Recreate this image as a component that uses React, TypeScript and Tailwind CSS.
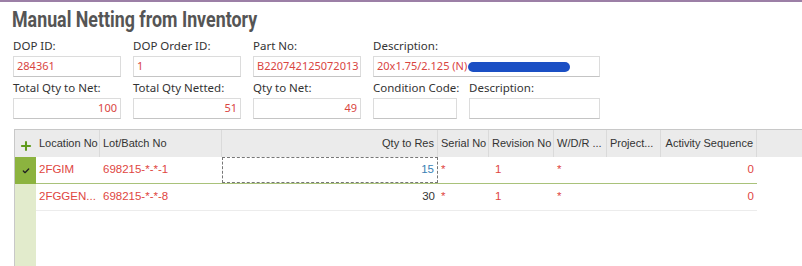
import { Check, Plus } from "lucide-react";

const labelFont = { fontFamily: '"Noto Sans", "DejaVu Sans", sans-serif' };

type Col = { key: string; title: string; w: string; align?: "right" };

const cols: Col[] = [
  { key: "loc", title: "Location No", w: "w-[64px]" },
  { key: "lot", title: "Lot/Batch No", w: "w-[122px]" },
  { key: "qty", title: "Qty to Res", w: "w-[216px]", align: "right" },
  { key: "serial", title: "Serial No", w: "w-[51px]" },
  { key: "rev", title: "Revision No", w: "w-[65px]" },
  { key: "wdr", title: "W/D/R ...", w: "w-[53px]" },
  { key: "proj", title: "Project...", w: "w-[54px]" },
  { key: "act", title: "Activity Sequence", w: "w-[96px]", align: "right" },
];

const rows = [
  { loc: "2FGIM", lot: "698215-*-*-1", qty: "15", serial: "*", rev: "1", wdr: "*", proj: "", act: "0" },
  { loc: "2FGGEN...", lot: "698215-*-*-8", qty: "30", serial: "*", rev: "1", wdr: "*", proj: "", act: "0" },
];

function Field({
  label,
  value,
  w,
  right,
  children,
}: {
  label: string;
  value?: string;
  w: string;
  right?: boolean;
  children?: React.ReactNode;
}) {
  return (
    <div className={`flex flex-col ${w}`}>
      <div className="h-[20px] whitespace-nowrap text-[11.5px] leading-[20px] text-[#333]" style={labelFont}>
        {label}
      </div>
      <div
        className={`flex h-[21px] items-center whitespace-nowrap border border-[#dcdcdc] border-b-[#c4c4c4] bg-white px-[3px] text-[11px] text-[#d9453f] ${
          right ? "justify-end" : ""
        }`}
        style={labelFont}
      >
        {value}
        {children}
      </div>
    </div>
  );
}

export default function App() {
  return (
    <div className="h-[266px] w-[802px] overflow-hidden bg-white">
      <div className="h-[2px] bg-[#9c7fa6]" />

      {/* HEADER */}
      <h1
        className="mt-[6px] ml-[12px] h-[24px] origin-left scale-x-[0.81] whitespace-nowrap text-[22px] font-bold leading-[24px] text-[#555]"
        style={{ fontFamily: 'Roboto, "Liberation Sans", sans-serif' }}
      >
        Manual Netting from Inventory
      </h1>

      {/* FORM */}
      <div className="mt-[4px] ml-[13px] flex flex-col gap-[1px]">
        <div className="flex gap-[12px]">
          <Field label="DOP ID:" value="284361" w="w-[108px]" />
          <Field label="DOP Order ID:" value="1" w="w-[108px]" />
          <Field label="Part No:" value="B220742125072013" w="w-[108px]" />
          <Field label="Description:" value="20x1.75/2.125 (N)" w="w-[227px]">
            <span className="ml-[1px] inline-block h-[10px] w-[102px] rounded-[5px] bg-[#1b4fc4]" />
          </Field>
        </div>
        <div className="flex gap-[12px]">
          <Field label="Total Qty to Net:" value="100" w="w-[108px]" right />
          <Field label="Total Qty Netted:" value="51" w="w-[108px]" right />
          <Field label="Qty to Net:" value="49" w="w-[108px]" right />
          <Field label="Condition Code:" w="w-[84px]" />
          <Field label="Description:" w="w-[131px]" />
        </div>
      </div>

      {/* GRID */}
      <div
        className="mt-[10px] ml-[14px] flex h-[200px] flex-col border-t border-l border-[#c8c8c8]"
        style={{ fontFamily: '"Liberation Sans", Arial, sans-serif' }}
      >
        <div className="flex h-[27px] bg-[#ebebeb] text-[11px] text-[#333]">
          <div className="flex w-[21px] shrink-0 items-center justify-center text-[#5f9a1c]">
            <Plus size={14} strokeWidth={3.5} className="mt-[5px]" />
          </div>
          {cols.map((c) => (
            <div
              key={c.key}
              className={`flex ${c.w} shrink-0 items-center overflow-hidden whitespace-nowrap border-r border-[#dadada] px-[3px] ${
                c.align === "right" ? "justify-end" : ""
              }`}
            >
              {c.title}
            </div>
          ))}
        </div>

        {rows.map((r, i) => (
          <div key={i} className="flex h-[27px] text-[11.5px]">
            <div
              className={`flex w-[21px] shrink-0 items-center justify-center ${
                i === 0 ? "bg-[#8cb33f] text-[#222]" : "bg-[#e2ebcc]"
              }`}
            >
              {i === 0 && <Check size={8} strokeWidth={4} />}
            </div>
            <div
              className={`flex border-b ${i === 0 ? "border-[#a9c27a]" : "border-[#ececec]"}`}
            >
              {cols.map((c) => {
                const v = (r as Record<string, string>)[c.key];
                const isQty = c.key === "qty";
                return (
                  <div
                    key={c.key}
                    className={`flex ${c.w} shrink-0 items-center overflow-hidden whitespace-nowrap px-[3px] ${
                      c.align === "right" ? "justify-end" : ""
                    } ${
                      isQty
                        ? i === 0
                          ? "border border-dashed border-[#777] text-[#3a7fb5]"
                          : "text-[#333]"
                        : "text-[#e0463f]"
                    } ${c.key === "rev" ? "pl-[6px]" : ""}`}
                  >
                    {v}
                  </div>
                );
              })}
            </div>
          </div>
        ))}

        <div className="flex flex-1">
          <div className="w-[21px] bg-[#e2ebcc]" />
        </div>
      </div>
    </div>
  );
}
